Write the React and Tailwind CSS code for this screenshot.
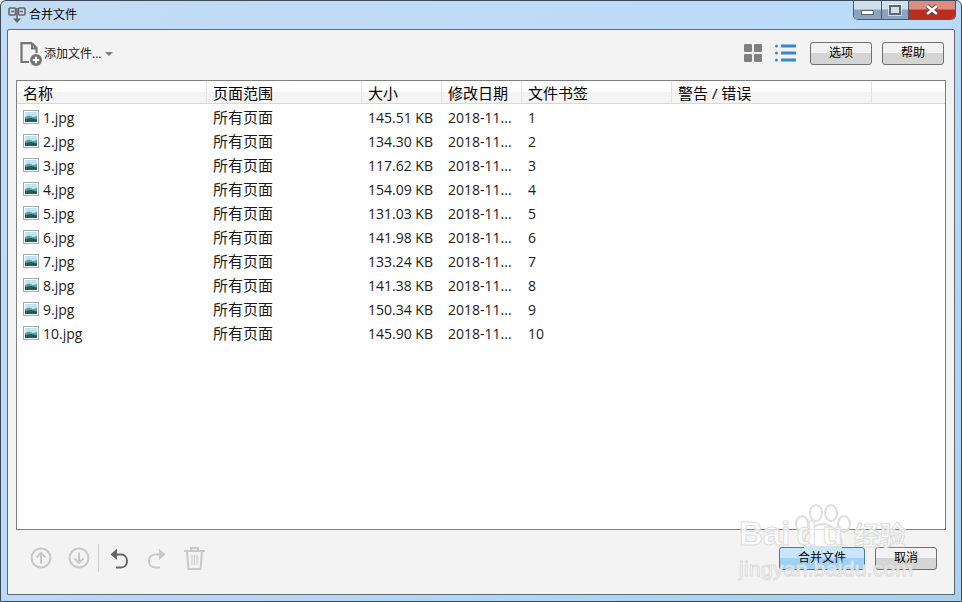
import React from "react";

const font = { fontFamily: '"Open Sans", "Noto Sans CJK SC", sans-serif' };

const rows = [
  ["1.jpg", "145.51 KB", "1"],
  ["2.jpg", "134.30 KB", "2"],
  ["3.jpg", "117.62 KB", "3"],
  ["4.jpg", "154.09 KB", "4"],
  ["5.jpg", "131.03 KB", "5"],
  ["6.jpg", "141.98 KB", "6"],
  ["7.jpg", "133.24 KB", "7"],
  ["8.jpg", "141.38 KB", "8"],
  ["9.jpg", "150.34 KB", "9"],
  ["10.jpg", "145.90 KB", "10"],
];

const headers = [
  ["名称", "w-[190px]"],
  ["页面范围", "w-[155px]"],
  ["大小", "w-[80px]"],
  ["修改日期", "w-[80px]"],
  ["文件书签", "w-[150px]"],
  ["警告 / 错误", "w-[200px]"],
];

const FileThumb = () => (
  <svg width="16" height="14" viewBox="0 0 16 14" className="shrink-0">
    <rect x="0.5" y="0.5" width="15" height="13" fill="#fff" stroke="#a8a8a8" />
    <rect x="2" y="2" width="12" height="10" fill="#bfe3f2" />
    <path d="M2 7 L6 5.5 L10 7 L14 6 V12 H2 Z" fill="#5aa596" />
    <path d="M2 9 L8 8 L14 9.5 V12 H2 Z" fill="#1d5a63" />
  </svg>
);

const PushButton = ({ children, className = "" }) => (
  <button
    className={`h-[23px] rounded-[3px] border border-[#707070] bg-gradient-to-b from-[#f2f2f2] from-45% to-[#d4d4d4] to-50% text-[12px] text-black ${className}`}
  >
    {children}
  </button>
);

const AddFileIcon = () => (
  <svg width="22" height="24" viewBox="0 0 22 24" fill="none">
    <path d="M12 1.2 H1.5 V20 H9 M12 1.2 L16.5 6 V11 M12 1.2 V6.5 H16.5" stroke="#757575" strokeWidth="2.2" />
    <circle cx="16" cy="18" r="6" fill="#757575" />
    <path d="M16 14.8 V21.2 M12.8 18 H19.2" stroke="#fff" strokeWidth="1.8" />
  </svg>
);

const GridIcon = () => (
  <svg width="18" height="18" viewBox="0 0 18 18" fill="#808080">
    <rect width="8" height="8" rx="1" />
    <rect x="10" width="8" height="8" rx="1" />
    <rect y="10" width="8" height="8" rx="1" />
    <rect x="10" y="10" width="8" height="8" rx="1" />
  </svg>
);

const ListIcon = () => (
  <svg width="21" height="18" viewBox="0 0 21 18" fill="#3a87d0">
    <circle cx="1.5" cy="2" r="1.5" />
    <circle cx="1.5" cy="9" r="1.5" />
    <circle cx="1.5" cy="16" r="1.5" />
    <rect x="6" y="0.5" width="15" height="3" rx="0.5" />
    <rect x="6" y="7.5" width="15" height="3" rx="0.5" />
    <rect x="6" y="14.5" width="15" height="3" rx="0.5" />
  </svg>
);

const CircleArrow = ({ down }) => (
  <svg width="22" height="22" viewBox="0 0 22 22" fill="none" stroke="#c8c8c8" strokeWidth="2">
    <circle cx="11" cy="11" r="9.5" />
    {down ? <path d="M11 5.5 V16 M6.5 11.5 L11 16 L15.5 11.5" /> : <path d="M11 16.5 V6 M6.5 10.5 L11 6 L15.5 10.5" />}
  </svg>
);

const UndoIcon = ({ color, flip }) => (
  <svg width="19" height="21" viewBox="0 0 19 21" fill="none" className={flip ? "-scale-x-100" : ""}>
    <path d="M5 6.5 H11 C19 6.5 19 19.5 11 19.5 H6" stroke={color} strokeWidth="2" />
    <path d="M7 0.5 V12 L0.5 6.5 Z" fill={color} />
  </svg>
);

const TrashIcon = () => (
  <svg width="21" height="23" viewBox="0 0 21 23" fill="none" stroke="#c8c8c8" strokeWidth="2">
    <path d="M0 4 H21 M7 4 V1 H14 V4 M3 4 L4.5 22 H16.5 L18 4" />
    <path d="M8 8 V18 M10.5 8 V18 M13 8 V18" strokeWidth="1" />
  </svg>
);

const TitleIcon = () => (
  <svg width="18" height="17" viewBox="0 0 18 17" fill="none" stroke="#666" strokeWidth="1.6">
    <rect x="1" y="1" width="6.5" height="7" rx="1" />
    <rect x="10.5" y="1" width="6.5" height="7" rx="1" />
    <path d="M9 1 V12 M3 4.5 H6 M12 4.5 H15" />
    <path d="M5 11.5 H13 L9 16 Z" fill="#666" stroke="none" />
  </svg>
);

// baidu watermark lies over the corner of the window
const Watermark = () => (
  <div
    className="absolute left-[738px] top-[521px] w-[180px] pointer-events-none"
    style={{ fontFamily: '"Liberation Sans", "Noto Sans CJK SC", sans-serif' }}
  >
    <svg width="60" height="44" viewBox="0 0 60 44" className="absolute left-[54px] top-[-18px]" fill="#ffffff" fillOpacity="0.7" stroke="#dedede" strokeWidth="2">
      <ellipse cx="9" cy="20" rx="6" ry="8" />
      <ellipse cx="23" cy="9" rx="6" ry="8" />
      <ellipse cx="38" cy="9" rx="6" ry="8" />
      <ellipse cx="51" cy="20" rx="6" ry="8" />
      <path d="M30 20 C20 20 8 34 12 43 H48 C52 34 40 20 30 20 Z" />
    </svg>
    <div className="relative flex items-end h-[28px] leading-none text-white/70 [-webkit-text-stroke:1px_#dcdcdc]">
      <span className="text-[33px] font-bold">Bai</span>
      <span className="ml-[6px] text-[33px] font-bold tracking-[6px]">du</span>
      <span className="ml-[5px] mb-[1px] text-[26px] font-bold">经验</span>
    </div>
    <div className="relative mt-[8px] text-[21px] leading-[22px] tracking-[0.3px] text-white/70 [-webkit-text-stroke:1px_#dcdcdc]">
      jingyan.baidu.com
    </div>
  </div>
);

export default function App() {
  return (
    <div
      className="relative w-[962px] h-[602px] flex flex-col overflow-hidden rounded-t-[6px] border border-[#3d4a57] bg-gradient-to-br from-[#c3dcf3] via-[#b9dafa] to-[#a9d0ee] px-[6px] pb-[6px]"
      style={font}
    >
      <div className="h-[28px] flex items-start justify-between shrink-0">
        <div className="flex items-center gap-[2px] h-[28px] pl-[1px]">
          <TitleIcon />
          <span className="ml-[1px] text-[12px] text-black">合并文件</span>
        </div>
        <div className="flex h-[20px] -mt-px mr-[-1px] border border-t-0 border-[#4b5a6a] rounded-b-[5px] overflow-hidden">
          <div className="w-[28px] flex items-end justify-center pb-[4px] bg-gradient-to-b from-[#cfdeed] from-45% to-[#8ba4bd] to-55% border-r border-[#4b5a6a]">
            <div className="w-[13px] h-[5px] bg-white border border-[#5a6876]" />
          </div>
          <div className="w-[27px] flex items-center justify-center bg-gradient-to-b from-[#cfdeed] from-45% to-[#8ba4bd] to-55% border-r border-[#4b5a6a]">
            <div className="w-[12px] h-[10px] bg-[#d5dfe9] border-2 border-[#5a6876] outline outline-1 outline-white/60" />
          </div>
          <div className="w-[46px] flex items-center justify-center bg-gradient-to-b from-[#dd8d80] from-45% to-[#bb2d1d] to-55%">
            <svg width="16" height="12" viewBox="0 0 16 12">
              <path d="M3 2 L13 10 M13 2 L3 10" stroke="#5c3a36" strokeWidth="4.4" />
              <path d="M3 2 L13 10 M13 2 L3 10" stroke="#fff" strokeWidth="2.8" />
            </svg>
          </div>
        </div>
      </div>

      <div className="flex-1 min-h-0 flex flex-col bg-[#f3f3f3] border border-[#5f6a75] rounded-t-[2px] px-[8px]">
        <div className="h-[50px] shrink-0 flex items-center justify-between pb-[4px]">
          <div className="flex items-center pl-[4px] pt-[1px]">
            <AddFileIcon />
            <span className="ml-[2px] text-[12px] text-[#222]">添加文件...</span>
            <span className="ml-[4px] w-0 h-0 border-x-[4px] border-x-transparent border-t-[4px] border-t-[#808080]" />
          </div>
          <div className="flex items-center mr-[1px]">
            <GridIcon />
            <span className="ml-[13px]"><ListIcon /></span>
            <PushButton className="ml-[14px] w-[62px]">选项</PushButton>
            <PushButton className="ml-[10px] w-[62px] mr-[1px]">帮助</PushButton>
          </div>
        </div>

        <div className="h-[450px] shrink-0 flex flex-col bg-white border border-[#7f7f7f]">
          <div className="h-[23px] flex shrink-0 border-b border-[#d8d8d8] bg-gradient-to-b from-white from-50% to-[#f4f4f4] to-50%">
            {headers.map(([label, w]) => (
              <div key={label} className={`${w} pl-[6px] pt-px border-r border-[#e4e4e4] text-[15px] leading-[23px] text-black`}>
                {label}
              </div>
            ))}
          </div>
          <div className="pt-[1px]">
            {rows.map(([name, size, mark]) => (
              <div key={name} className="h-[24px] flex items-center text-[14px] text-[#1a1a1a]">
                <div className="w-[190px] pl-[6px] flex items-center gap-[4px]">
                  <FileThumb />
                  <span>{name}</span>
                </div>
                <div className="w-[155px] pl-[6px] text-[15px]">所有页面</div>
                <div className="w-[80px] pl-[6px]">{size}</div>
                <div className="w-[80px] pl-[6px]">2018-11...</div>
                <div className="w-[150px] pl-[6px]">{mark}</div>
              </div>
            ))}
          </div>
        </div>

        <div className="flex-1 flex items-center justify-between pb-[8px]">
          <div className="flex items-center pl-[14px]">
            <CircleArrow />
            <span className="ml-[16px]"><CircleArrow down /></span>
            <span className="ml-[8px] w-px h-[28px] bg-[#d0d0d0]" />
            <span className="ml-[11px]"><UndoIcon color="#666" /></span>
            <span className="ml-[18px]"><UndoIcon color="#c8c8c8" flip /></span>
            <span className="ml-[18px]"><TrashIcon /></span>
          </div>
          <div className="flex items-center mr-[9px]">
            <PushButton className="w-[86px] !border-[#3c7fb1] !from-[#c9e6fb] !to-[#9fd2f5]">合并文件</PushButton>
            <PushButton className="ml-[10px] w-[62px]">取消</PushButton>
          </div>
        </div>
      </div>
      <Watermark />
    </div>
  );
}
